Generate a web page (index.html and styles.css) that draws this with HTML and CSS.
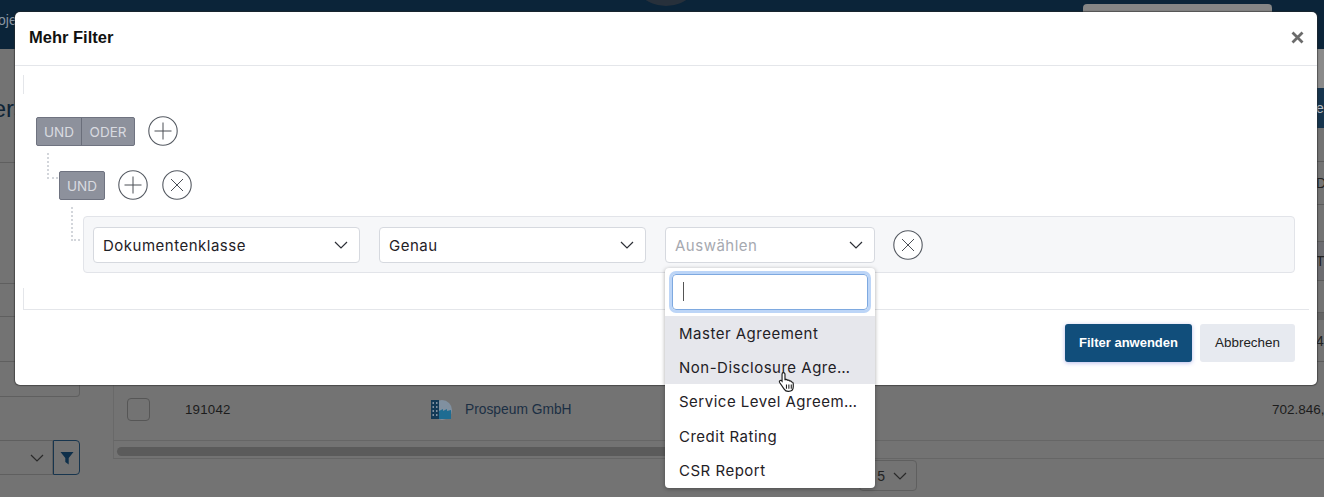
FILE: index.html
```html
<!DOCTYPE html>
<html lang="de">
<head>
<meta charset="utf-8">
<title>Mehr Filter</title>
<link rel="stylesheet" href="styles.css">
</head>
<body>
<div class="page">
  <header class="topbar">
    <span class="topbar-link">oje</span>
    <span class="avatar"></span>
    <span class="search-pill"></span>
  </header>
  <main class="content">
    <aside class="sidebar">
      <div class="side-title">Vers</div>
      <div class="side-row side-row-a"></div>
      <div class="side-row side-row-b"></div>
      <div class="side-row side-row-c"></div>
      <div class="side-box"></div>
      <div class="side-filter">
        <span class="side-select">
          <svg class="chev" width="14" height="8" viewBox="0 0 14 8"><path d="M1 1l6 6 6-6"/></svg>
        </span>
        <span class="side-btn">
          <svg width="14" height="14" viewBox="0 0 14 14"><path d="M0.5 1h13L8.700 7v6.500L5.300 11V7z" fill="#0e2f4a"/></svg>
        </span>
      </div>
    </aside>
    <section class="table-area">
      <div class="band-top"></div>
      <div class="band-head"><span class="band-text">e</span></div>
      <div class="bg-row bg-row-1"></div>
      <div class="bg-row bg-row-2"><span class="band-text">D</span></div>
      <div class="bg-row bg-row-3"></div>
      <div class="bg-row bg-row-4"><span class="band-text">T</span></div>
      <div class="bg-row bg-row-5"></div>
      <div class="bg-row bg-row-6"><span class="band-text">4,</span></div>
      <div class="data-row">
        <span class="checkbox"></span>
        <span class="doc-id">191042</span>
        <svg class="company-icon" width="22" height="23" viewBox="0 0 22 23">
          <circle cx="12" cy="12" r="10" fill="#8090a0"/>
          <path d="M1 2h8v19H1z" fill="#133a57"/>
          <path d="M2.500 4h1.500v2H2.500zM6 4h1.500v2H6zM2.500 8h1.500v2H2.500zM6 8h1.500v2H6zM2.500 12h1.500v2H2.500zM6 12h1.500v2H6zM2.500 16h1.500v2H2.500zM6 16h1.500v2H6z" fill="#8090a0"/>
          <path d="M9 13l4-2v2l4-2v2l4-1v9H9z" fill="#1e6c92"/>
        </svg>
        <span class="company">Prospeum GmbH</span>
        <span class="amount">702.846,</span>
      </div>
      <div class="scroll-row"><span class="scroll-thumb"></span></div>
      <div class="pager">
        <span class="pager-select">5
          <svg class="chev" width="14" height="8" viewBox="0 0 14 8"><path d="M1 1l6 6 6-6"/></svg>
        </span>
      </div>
    </section>
  </main>

  <div class="modal">
    <div class="modal-head">
      <h1 class="modal-title">Mehr Filter</h1>
      <svg class="modal-close" width="13" height="13" viewBox="0 0 13 13"><path d="M1.500 1.500l10 10M11.500 1.500l-10 10"/></svg>
    </div>
    <div class="modal-body">
      <div class="tick"></div>
      <div class="group-row group-root">
        <div class="toggle">
          <span class="toggle-btn toggle-und">UND</span>
          <span class="toggle-btn toggle-oder">ODER</span>
        </div>
        <svg class="round-icon" viewBox="0 0 30 30"><circle cx="15" cy="15" r="14.200"/><path d="M15 6.500v17M6.500 15h17"/></svg>
      </div>
      <div class="group-row group-sub">
        <span class="connector connector-sub"></span>
        <div class="toggle"><span class="toggle-btn toggle-single">UND</span></div>
        <svg class="round-icon" viewBox="0 0 30 30"><circle cx="15" cy="15" r="14.200"/><path d="M15 6.500v17M6.500 15h17"/></svg>
        <svg class="round-icon" viewBox="0 0 30 30"><circle cx="15" cy="15" r="14.200"/><path d="M9 9l12 12M21 9L9 21"/></svg>
      </div>
      <div class="rule-wrap">
        <span class="connector connector-rule"></span>
        <div class="rule">
          <div class="select select-wide">
            <span class="select-text">Dokumentenklasse</span>
            <svg class="chev" width="14" height="8" viewBox="0 0 14 8"><path d="M1 1l6 6 6-6"/></svg>
          </div>
          <div class="select select-wide">
            <span class="select-text">Genau</span>
            <svg class="chev" width="14" height="8" viewBox="0 0 14 8"><path d="M1 1l6 6 6-6"/></svg>
          </div>
          <div class="select select-value">
            <span class="select-text placeholder">Auswählen</span>
            <svg class="chev" width="14" height="8" viewBox="0 0 14 8"><path d="M1 1l6 6 6-6"/></svg>
            <div class="dropdown">
              <div class="search-wrap"><div class="search-input"><span class="caret"></span></div></div>
              <div class="option option-hover">Master Agreement</div>
              <div class="option option-hover">Non-Disclosure Agre…</div>
              <div class="option">Service Level Agreem…</div>
              <div class="option">Credit Rating</div>
              <div class="option">CSR Report</div>
            </div>
          </div>
          <svg class="round-icon" viewBox="0 0 30 30"><circle cx="15" cy="15" r="14.200"/><path d="M9 9l12 12M21 9L9 21"/></svg>
        </div>
      </div>
      <div class="tick tick-bottom"></div>
    </div>
    <div class="modal-foot">
      <button class="btn btn-primary">Filter anwenden</button>
      <button class="btn btn-light">Abbrechen</button>
    </div>
  </div>

  <svg class="hand" width="19" height="22" viewBox="0 0 18 21">
    <path d="M5 1.500c1 0 1.600.7 1.600 1.700v5l1-.2c.8 0 1.200.3 1.500.8.8-.3 1.600 0 1.900.7.9-.2 1.700.2 2 1 .9 0 1.500.6 1.500 1.600v3c0 2.500-1.800 4.400-4.500 4.400H9.500c-1.800 0-2.800-.8-3.700-2.200L1.500 11c-.5-.9-.2-1.700.5-2 .7-.3 1.300 0 1.800.6V3.200C3.800 2.200 4 1.500 5 1.500z" fill="#fff" stroke="#1d1d1d" stroke-width="1.100"/>
    <path d="M8 13v4M10.300 13v4M12.600 13v4" stroke="#1d1d1d" stroke-width="1"/>
  </svg>
</div>
</body>
</html>
```
FILE: styles.css
```css
* { box-sizing: border-box; }
html, body { margin: 0; padding: 0; }
body { font-family: "Liberation Sans", Arial, sans-serif; }

.page {
  position: relative;
  width: 1324px;
  height: 497px;
  overflow: hidden;
  background: #737373;
}

/* Dimmed page behind the dialog */
.topbar {
  height: 49px;
  background: #0b2439;
  display: grid;
  grid-template-columns: 629px 74px 380px 189px 1fr;
  overflow: hidden;
}
.topbar-link {
  grid-column: 1;
  margin: 12px 0 0 -2px;
  font-size: 14px;
  color: #8a96a2;
}
.avatar {
  grid-column: 2;
  width: 74px;
  height: 74px;
  margin-top: -68px;
  border-radius: 50%;
  background: #27303b;
}
.search-pill {
  grid-column: 4;
  height: 30px;
  margin-top: 4px;
  border-radius: 4px;
  background: #858585;
}

.content {
  display: flex;
  height: 448px;
}
.sidebar {
  width: 80px;
  flex: none;
  display: flex;
  flex-direction: column;
}
.side-title {
  height: 113px;
  margin-left: -22px;
  padding-top: 43px;
  font-size: 24px;
  line-height: 34px;
  color: #0f2436;
}
.side-row { border-top: 1px solid #5f5f5f; }
.side-row-a { height: 121px; }
.side-row-b { height: 33px; }
.side-row-c { height: 45px; }
.side-box {
  height: 36px;
  border: 1px solid #5f5f5f;
  border-left: 0;
  border-radius: 0 0 4px 0;
}
.side-filter {
  display: flex;
  height: 35px;
  margin-top: 43px;
}
.side-select {
  flex: 1;
  display: flex;
  align-items: center;
  justify-content: flex-end;
  padding-right: 8px;
  border: 1px solid #5f5f5f;
  border-left: 0;
}
.side-btn {
  width: 27px;
  display: flex;
  align-items: center;
  justify-content: center;
  border: 1px solid #17354e;
  border-radius: 0 4px 4px 0;
}

.table-area {
  flex: 1;
  margin-left: 33px;
  min-width: 0;
  display: flex;
  flex-direction: column;
}
.band-top {
  height: 39px;
  margin-right: -1px;
  background: #8a8a8a;
}
.band-head {
  height: 40px;
  background: #16344d;
  display: flex;
  justify-content: flex-end;
  align-items: center;
}
.band-text {
  margin-left: auto;
  font-size: 14px;
  color: #b5bcc4;
  width: 8px;
  overflow: hidden;
}
.bg-row {
  display: flex;
  align-items: center;
  border-bottom: 1px solid #5c5c5c;
  border-left: 1px solid #696969;
}
.bg-row .band-text { color: #222; }
.bg-row-1 { height: 34px; }
.bg-row-2 { height: 43px; }
.bg-row-3 { height: 37px; }
.bg-row-4 { height: 39px; background: #6c6c70; }
.bg-row-5 { height: 32px; }
.bg-row-6 { height: 49px; border-top: 7px solid #646464; }

.data-row {
  height: 79px;
  display: flex;
  align-items: center;
  border-left: 1px solid #696969;
  border-bottom: 1px solid #666;
  padding-top: 16px;
  font-size: 13.3px;
}
.checkbox {
  width: 23px;
  height: 23px;
  margin-left: 13px;
  border: 1px solid #565656;
  border-radius: 4px;
}
.doc-id {
  margin-left: 35px;
  width: 245px;
  color: #1c1c1c;
  letter-spacing: 0.2px;
}
.company-icon { width: 22px; height: 23px; margin-right: 13px; }
.company { color: #1b2f44; font-size: 13.8px; }
.amount {
  margin-left: auto;
  color: #1c1c1c;
  font-size: 13.5px;
  width: 52px;
  flex: none;
  white-space: nowrap;
  overflow: hidden;
}

.scroll-row {
  height: 18px;
  padding: 6px 0 0 3px;
  border-left: 1px solid #696969;
  border-bottom: 1px solid #666;
}
.scroll-thumb {
  display: block;
  width: 590px;
  height: 9px;
  border-radius: 5px;
  background: #5b5b5b;
}
.pager { padding: 1px 0 0 746px; }
.pager-select {
  display: flex;
  align-items: center;
  justify-content: flex-end;
  gap: 8px;
  width: 58px;
  height: 31px;
  padding-right: 9px;
  border: 1px solid #5f5f5f;
  border-radius: 4px;
  font-size: 14px;
  color: #222;
}

.chev { flex: none; }
.chev path { fill: none; stroke: #2c2f36; stroke-width: 1.2; }
.sidebar .chev path, .pager .chev path { stroke: #2a2a2a; }

/* Dialog */
.modal {
  position: absolute;
  left: 15px;
  top: 12px;
  width: 1302px;
  height: 373px;
  display: flex;
  flex-direction: column;
  background: #fff;
  border-radius: 5px;
  box-shadow: 0 0 1px 1px rgba(40, 40, 40, .55);
}
.modal-head {
  height: 54px;
  flex: none;
  display: flex;
  align-items: center;
  justify-content: space-between;
  padding: 0 13px 3px 14px;
  border-bottom: 1px solid #e4e6ea;
}
.modal-title {
  margin: 0;
  font-size: 16.5px;
  font-weight: 700;
  color: #111;
}
.modal-close path { fill: none; stroke: #6b6b6b; stroke-width: 2.8; }

.modal-body {
  flex: none;
  height: 244px;
  margin: 0 8px;
  padding-top: 9px;
  display: flex;
  flex-direction: column;
  border-bottom: 1px solid #e4e6ea;
}
.tick {
  width: 1px;
  height: 19px;
  flex: none;
  background: #e4e6ea;
}
.tick-bottom { margin-top: 15px; height: 21px; }

.group-row {
  display: flex;
  align-items: center;
  position: relative;
}
.group-root { margin: 22px 0 0 13px; gap: 13px; height: 30px; }
.group-sub { margin: 24px 0 0 36px; gap: 14px; height: 30px; }
.group-sub .toggle { margin-right: -1px; }

.toggle {
  display: flex;
  height: 29px;
  border: 1px solid #6f7380;
  border-radius: 2px;
  background: #8d919c;
}
.toggle-btn {
  display: flex;
  align-items: center;
  justify-content: center;
  padding-top: 1px;
  font-family: Inter, "Liberation Sans", sans-serif;
  font-size: 13.5px;
  color: #d9dbe0;
}
.toggle-und { width: 45px; border-right: 1px solid #6a6e7a; }
.toggle-oder { width: 52px; }
.toggle-single { width: 44px; }

.round-icon { width: 30px; height: 30px; flex: none; }
.round-icon circle { fill: #fff; stroke: #555a62; stroke-width: 1.1; }
.round-icon path { fill: none; stroke: #4a4e55; stroke-width: 1; }

.connector {
  position: absolute;
  border-left: 2px dotted #d3d6db;
  border-bottom: 2px dotted #d3d6db;
}
.connector-sub { left: -12px; top: -17px; width: 11px; height: 26px; }
.connector-rule { left: -12px; top: -9px; width: 9px; height: 34px; }

.rule-wrap {
  position: relative;
  margin: 16px 0 0 60px;
  z-index: 2;
}
.rule {
  width: 1212px;
  height: 57px;
  display: flex;
  align-items: center;
  padding: 0 9px;
  gap: 19px;
  background: #f6f7f9;
  border: 1px solid #e2e4e9;
  border-radius: 4px;
}
.select {
  position: relative;
  height: 36px;
  display: flex;
  align-items: center;
  justify-content: space-between;
  padding: 0 11px 0 9px;
  background: #fff;
  border: 1px solid #d6d9df;
  border-radius: 4px;
  font-family: Inter, "Liberation Sans", sans-serif;
  font-size: 15px;
  letter-spacing: .5px;
  color: #1f2126;
}
.select-text { padding-top: 2px; }
.select-wide { width: 267px; flex: none; }
.select-value { width: 210px; flex: none; margin-right: -1px; }
.placeholder { color: #a6a9b0; }

.dropdown {
  position: absolute;
  left: -1px;
  top: 40px;
  width: 210px;
  height: 220px;
  padding-top: 6px;
  background: #fff;
  border-radius: 4px;
  box-shadow: 0 1px 4px rgba(0, 0, 0, .35);
  overflow: hidden;
  z-index: 3;
}
.search-wrap { padding: 0 7px; height: 42px; }
.search-input {
  height: 36px;
  display: flex;
  align-items: center;
  padding-left: 10px;
  border: 1px solid #7ea9e0;
  border-radius: 4px;
  box-shadow: 0 0 0 3px #bcd5f7;
}
.caret { width: 1px; height: 19px; background: #555; }
.option {
  height: 34.4px;
  line-height: 35px;
  padding-left: 14px;
  white-space: nowrap;
}
.option-hover { background: #e6e7ec; }

.modal-foot {
  flex: 1;
  display: flex;
  justify-content: flex-end;
  gap: 8px;
  padding: 14px 22px 0 0;
}
.btn {
  height: 38px;
  padding: 0 0 2px;
  border: 0;
  border-radius: 3px;
  font-family: "Liberation Sans", Arial, sans-serif;
  font-size: 13.4px;
}
.btn-primary {
  width: 127px;
  background: #114e7b;
  color: #fff;
  font-size: 13px;
  font-weight: 700;
  box-shadow: 0 1px 4px rgba(50, 60, 200, .35);
}
.btn-light { width: 95px; background: #e7eaf0; color: #222; }

.hand {
  position: absolute;
  left: 778px;
  top: 371px;
  z-index: 5;
}
```
